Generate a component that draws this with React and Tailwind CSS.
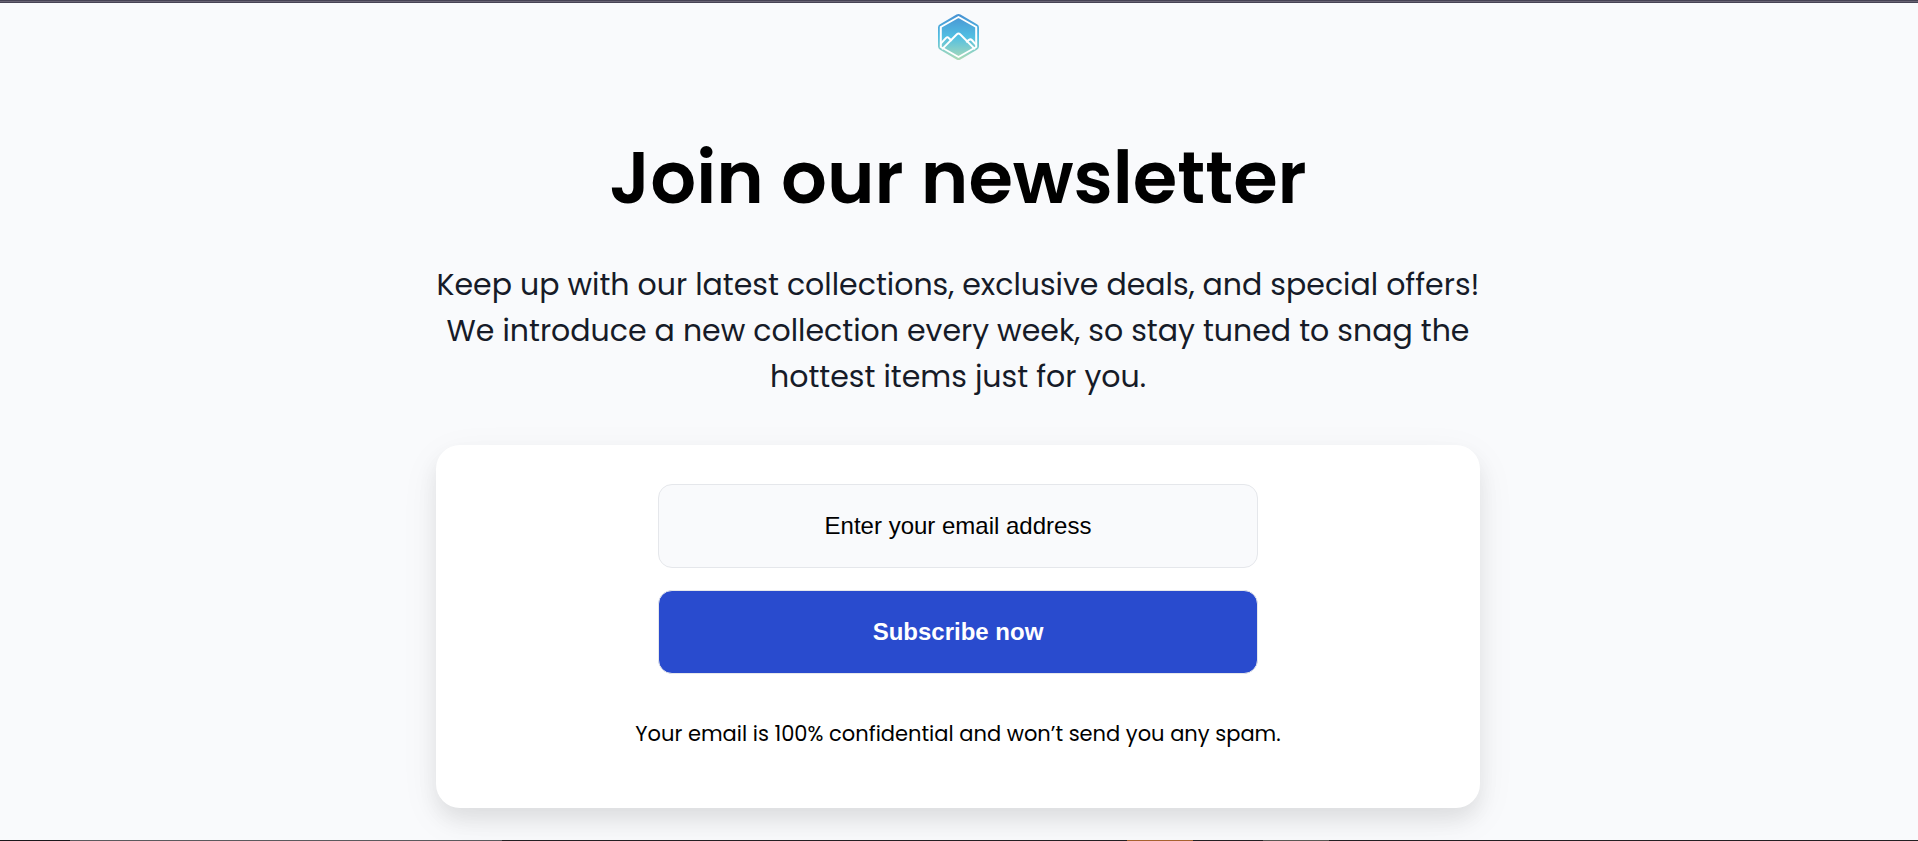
const stripSegments = [
  { width: 70, tone: "bg-[#1a171b]" },
  { width: 432, tone: "bg-[#5a595d]" },
  { width: 625, tone: "bg-[#231f22]" },
  { width: 66, tone: "bg-[#a8622f]" },
  { width: 70, tone: "bg-[#231f22]" },
  { width: 66, tone: "bg-[#5a5854]" },
  { width: 589, tone: "bg-[#231f22]" },
];

function Logo() {
  return (
    <svg viewBox="0 0 41 46" className="h-[46px] w-[41px]" role="img" aria-label="Mountain logo">
      <defs>
        <linearGradient id="sky" x1="0" y1="0" x2="0" y2="1">
          <stop offset="0" stopColor="#4791d3" />
          <stop offset="0.5" stopColor="#52bfe2" />
          <stop offset="1" stopColor="#aedbb5" />
        </linearGradient>
      </defs>
      <path
        d="M18.5 0.6Q20.5 -0.5 22.5 0.6L39 10.2Q41 11.3 41 13.4V32.6Q41 34.7 39 35.8L22.5 45.4Q20.5 46.5 18.5 45.4L2 35.8Q0 34.7 0 32.6V13.4Q0 11.3 2 10.2Z"
        fill="url(#sky)"
      />
      <g fill="none" stroke="#fff" strokeWidth="2" strokeLinejoin="round" strokeLinecap="round">
        <path d="M20.5 3L38.2 13V33L20.5 43L2.8 33V13Z" />
        <path d="M4.6 34.6L18.9 20.3Q20.5 18.7 22.1 20.3L36.4 34.6" />
        <path d="M3 29.4L8.1 23.9Q9.4 22.6 10.7 23.9L13.2 26.2" />
        <path d="M28.8 27.6L31 25.9Q32.5 24.8 33.8 26L38 30.6" />
      </g>
    </svg>
  );
}

export default function App() {
  return (
    <div className="flex min-h-screen flex-col bg-[#f9fafc] font-[Poppins,Inter,sans-serif] text-black">
      <div className="h-[3px] border-y border-[#464354] bg-[#696474]" />
      <main className="flex grow flex-col items-center pr-[18px] pb-8 pl-4 text-center">
        <header className="pt-[11px]">
          <Logo />
        </header>
        <h1 className="mt-16 text-7xl leading-[108px] font-semibold">Join our newsletter</h1>
        <p className="mt-[30px] w-full max-w-[1044px] text-[30px] leading-[46px] text-[#161b28]">
          Keep up with our latest collections, exclusive deals, and special offers! We introduce a new
          collection every week, so stay tuned to snag the hottest items just for you.
        </p>
        <section className="mt-[45px] w-full max-w-[1044px] rounded-3xl bg-white px-6 pt-[39px] pb-[58px] shadow-[0_12px_40px_rgba(0,0,0,0.06),0_12px_20px_rgba(0,0,0,0.07)]">
          <form
            className="mx-auto flex max-w-[600px] flex-col gap-[22px] font-[Arial,'Liberation_Sans',sans-serif] text-2xl"
            onSubmit={(event) => event.preventDefault()}
          >
            <input
              type="email"
              aria-label="Email address"
              placeholder="Enter your email address"
              className="h-[84px] w-full rounded-[14px] border border-[#e5e7eb] bg-[#f9fafc] px-6 text-center placeholder:text-black"
            />
            <button
              type="submit"
              className="h-[84px] w-full rounded-[14px] border border-[#e5e7eb] bg-[#294bce] font-bold text-white"
            >
              Subscribe now
            </button>
          </form>
          <p className="mt-11 text-[21px] leading-8">
            Your email is 100% confidential and won’t send you any spam.
          </p>
        </section>
      </main>
      <div className="flex h-px">
        {stripSegments.map((segment, index) => (
          <div key={index} className={segment.tone} style={{ flex: `${segment.width} 1 0` }} />
        ))}
      </div>
    </div>
  );
}
